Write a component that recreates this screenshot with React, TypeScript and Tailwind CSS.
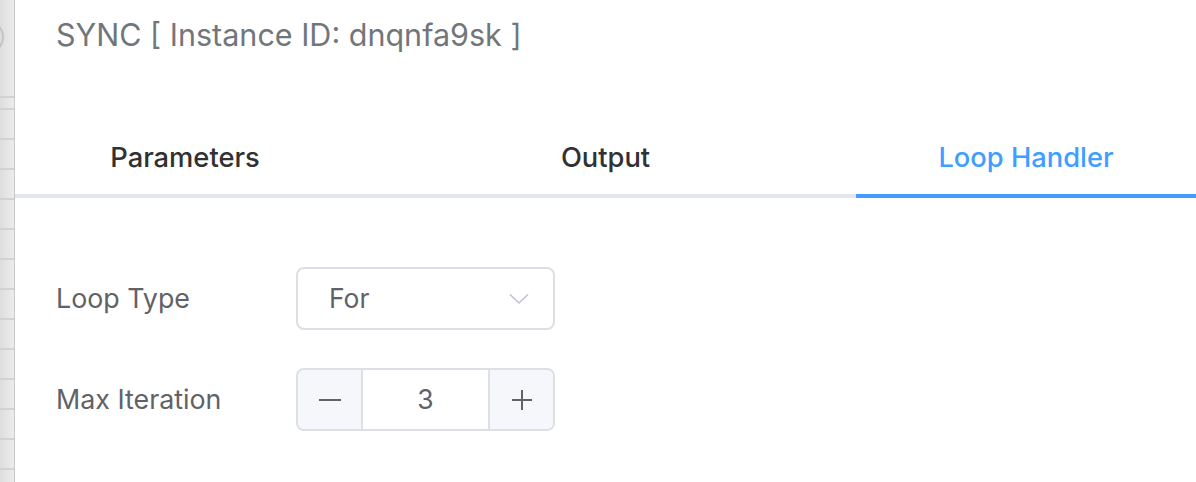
import React from "react"

const font = { fontFamily: "Inter, 'Noto Sans', sans-serif" }

function SideStrip() {
  const rows = Array.from({ length: 12 })
  return (
    <div className="relative w-[15px] shrink-0 h-[482px] overflow-hidden bg-gradient-to-r from-[#dedede] to-[#ececec] border-r border-[#c9c9c9]">
      <div className="absolute left-[-30px] top-[20px] w-[34px] h-[34px] rounded-full border-2 border-[#c4c4c4]" />
      <div className="flex flex-col pt-[96px]">
        <div className="h-[2px] bg-[#d2d2d2]" />
        <div className="h-[10px]" />
        <div className="h-[2px] bg-[#d2d2d2]" />
        {rows.map((_, i) => (
          <React.Fragment key={i}>
            <div className="h-[28px]" />
            <div className="h-[2px] bg-[#d2d2d2]" />
          </React.Fragment>
        ))}
      </div>
    </div>
  )
}

export default function App() {
  const tabs = ["Parameters", "Output", "Loop Handler"]
  const active = 2

  return (
    <div className="flex w-[1196px] h-[482px] bg-white overflow-hidden" style={font}>
      <SideStrip />
      <div className="flex-1 flex flex-col shadow-[-4px_0_8px_rgba(0,0,0,0.08)]">
        {/* Header */}
        <div className="h-[120px] pl-[41px] pt-[15px]">
          <h1 className="text-[30.5px] leading-[40px] text-[#72767b] font-normal">
            SYNC [ Instance ID: dnqnfa9sk ]
          </h1>
        </div>

        {/* Tabs */}
        <div className="flex justify-between border-b-4 border-[#e4e7ed]">
          {tabs.map((t, i) => (
            <div
              key={t}
              className={
                "relative w-[340px] h-[74px] flex items-center justify-center pt-[2px] text-[27.3px] font-medium " +
                (i === active ? "text-[#409eff]" : "text-[#303133]")
              }
            >
              {t}
              {i === active && (
                <div className="absolute left-0 right-0 bottom-[-4px] h-[4px] bg-[#409eff]" />
              )}
            </div>
          ))}
        </div>

        {/* Form */}
        <div className="pl-[41px] pt-[69px] flex flex-col gap-[38px]">
          <div className="flex items-center">
            <label className="w-[240px] text-[26.8px] text-[#606266]">Loop Type</label>
            <div className="w-[259px] h-[63px] rounded-[8px] border-2 border-[#dcdfe6] flex items-center justify-between pl-[31px] pr-[24px]">
              <span className="text-[26.5px] text-[#606266]">For</span>
              <svg width="20" height="12" viewBox="0 0 20 12" fill="none">
                <path d="M1 1.5 L10 10 L19 1.5" stroke="#c0c4cc" strokeWidth="1.6" />
              </svg>
            </div>
          </div>
          <div className="flex items-center">
            <label className="w-[240px] text-[26.8px] text-[#606266]">Max Iteration</label>
            <div className="w-[259px] h-[63px] rounded-[8px] border-2 border-[#dcdfe6] flex overflow-hidden">
              <div className="w-[65px] bg-[#f5f7fa] border-r-2 border-[#dcdfe6] flex items-center justify-center">
                <svg width="22" height="2" viewBox="0 0 22 2">
                  <rect width="22" height="2" fill="#606266" />
                </svg>
              </div>
              <div className="flex-1 flex items-center justify-center text-[26.5px] text-[#606266]">3</div>
              <div className="w-[65px] bg-[#f5f7fa] border-l-2 border-[#dcdfe6] flex items-center justify-center">
                <svg width="20" height="20" viewBox="0 0 20 20">
                  <rect y="9" width="20" height="2" fill="#606266" />
                  <rect x="9" width="2" height="20" fill="#606266" />
                </svg>
              </div>
            </div>
          </div>
        </div>
      </div>
    </div>
  )
}
